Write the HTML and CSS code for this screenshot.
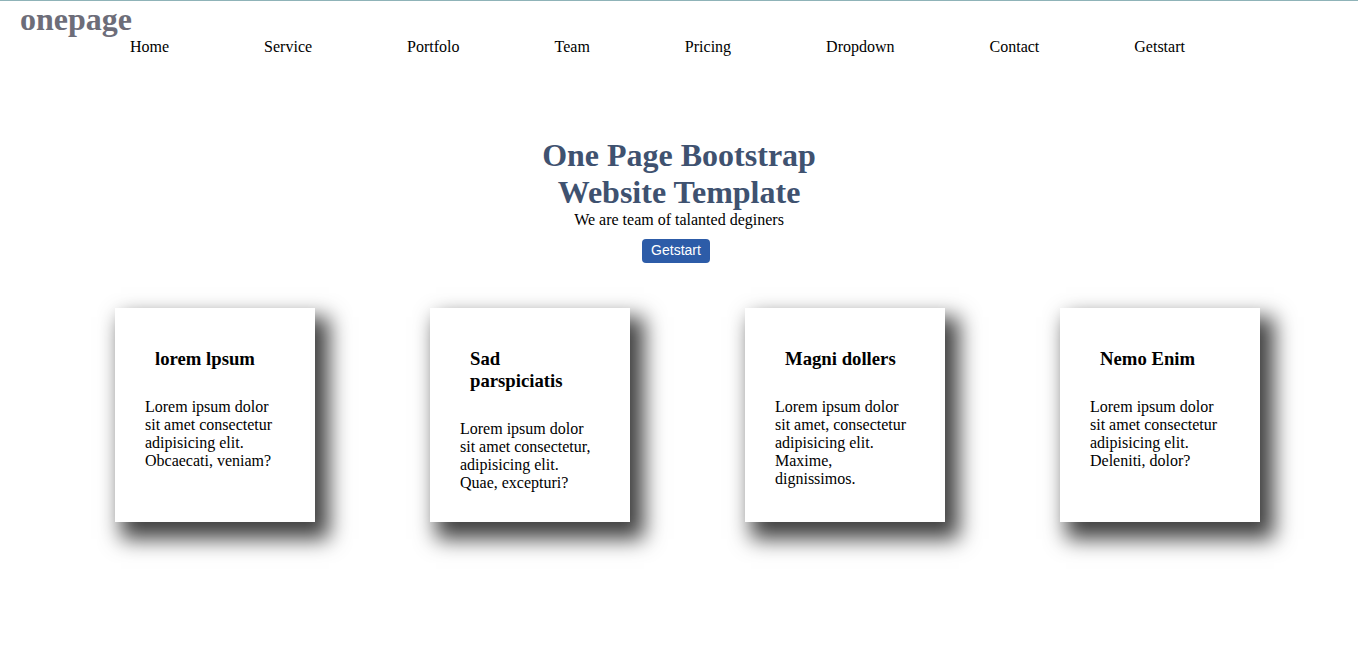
FILE: index.html
```
<!DOCTYPE html>
<html>
<head>
    <title>onepage</title>
    <link rel="stylesheet" href="styles.css">
</head>
<body>
    <header class="header">
        <h1 class="logo">onepage</h1>
        <nav class="nav">
            <a href="#">Home</a>
            <a href="#">Service</a>
            <a href="#">Portfolo</a>
            <a href="#">Team</a>
            <a href="#">Pricing</a>
            <a href="#">Dropdown</a>
            <a href="#">Contact</a>
            <a href="#">Getstart</a>
        </nav>
    </header>

    <section class="hero">
        <h2 class="hero-title">One Page Bootstrap Website Template</h2>
        <p class="hero-sub">We are team of talanted deginers</p>
        <button class="btn">Getstart</button>
    </section>

    <section class="cards">
        <div class="card">
            <h3>lorem lpsum</h3>
            <p>Lorem ipsum dolor sit amet consectetur adipisicing elit. Obcaecati, veniam?</p>
        </div>
        <div class="card">
            <h3>Sad parspiciatis</h3>
            <p>Lorem ipsum dolor sit amet consectetur, adipisicing elit. Quae, excepturi?</p>
        </div>
        <div class="card">
            <h3>Magni dollers</h3>
            <p>Lorem ipsum dolor sit amet, consectetur adipisicing elit. Maxime, dignissimos.</p>
        </div>
        <div class="card">
            <h3>Nemo Enim</h3>
            <p>Lorem ipsum dolor sit amet consectetur adipisicing elit. Deleniti, dolor?</p>
        </div>
    </section>
</body>
</html>
```

FILE: styles.css
```
body { margin: 0; font-family: "Liberation Serif", "Times New Roman", serif; font-size: 16px; color: #000; background: #fff; border-top: 1px solid #8fb3b8; }
.header { padding: 0 20px; }
.logo { margin: 0; font-size: 32px; color: #6d6d79; line-height: 37px; }
.nav { display: flex; gap: 95px; padding-left: 110px; line-height: 18px; }
.nav a { color: #000; text-decoration: none; }
.hero { text-align: center; padding-top: 81px; }
.hero-title { width: 300px; margin: 0 auto; font-size: 32px; line-height: 36.8px; color: #3f5270; }
.hero-sub { margin: 0; line-height: 18px; }
.btn { margin-top: 10px; margin-right: 6px; background: #2d5ca8; color: #fff; border: none; border-radius: 4px; padding: 3px 9px 4px; font-family: "Liberation Sans", Arial, sans-serif; font-size: 14px; line-height: 17px; }
.cards { display: flex; gap: 115px; padding: 45px 0 110px 115px; }
.card { width: 200px; height: 214px; box-sizing: border-box; padding: 20px 30px; background: #fff; box-shadow: 10px 13px 20px 4px rgba(0, 0, 0, 0.75); }
.card h3 { margin: 20px 10px 0; font-size: 18.72px; line-height: 22px; }
.card p { margin: 28px 0 0; line-height: 18px; }
```
